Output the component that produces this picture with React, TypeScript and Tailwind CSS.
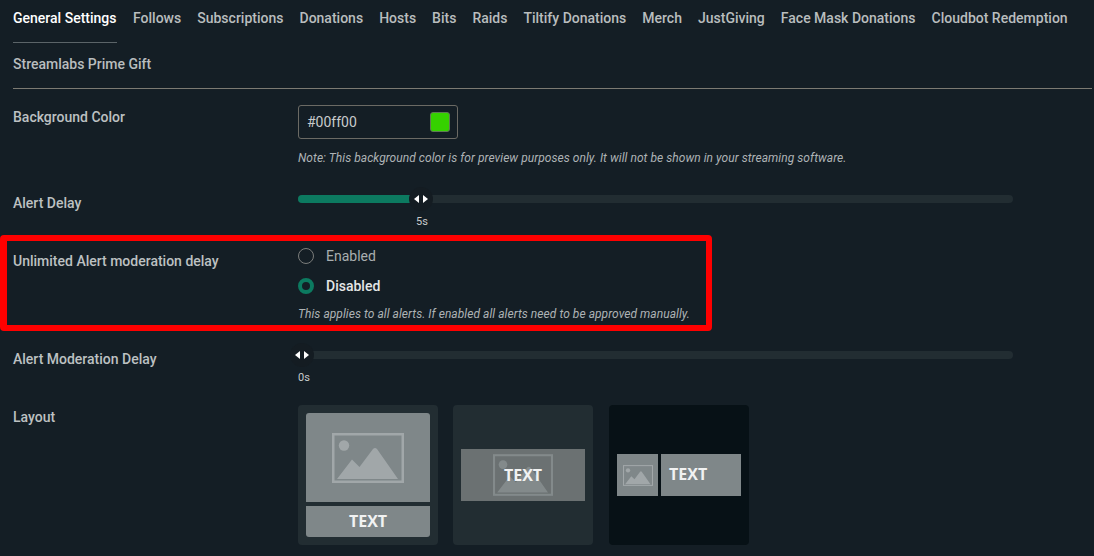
import React from "react";

const tabs = [
  "General Settings",
  "Follows",
  "Subscriptions",
  "Donations",
  "Hosts",
  "Bits",
  "Raids",
  "Tiltify Donations",
  "Merch",
  "JustGiving",
  "Face Mask Donations",
  "Cloudbot Redemption",
];

// Picture placeholder used in the layout cards
const ImageIcon = ({ className, color }: { className: string; color: string }) => (
  <svg viewBox="0 0 72 50" className={className} fill="none">
    <rect x="1.25" y="1.25" width="69.5" height="47.5" stroke={color} strokeWidth="2.5" />
    <circle cx="12" cy="12.5" r="5.2" fill={color} />
    <path d="M5 46 L20 26.5 L27.5 34 L41 16 Q43 14 45 16 L66 46 Z" fill={color} />
  </svg>
);

const Thumb = ({ left }: { left: string }) => (
  <div
    className={`absolute top-1/2 -translate-y-1/2 ${left} w-6 h-6 rounded-full bg-[#141c22] flex items-center justify-center gap-[4px]`}
  >
    <span className="w-0 h-0 border-y-[4.5px] border-y-transparent border-r-[5px] border-r-white" />
    <span className="w-0 h-0 border-y-[4.5px] border-y-transparent border-l-[5px] border-l-white" />
  </div>
);

const Label = ({ children }: { children: React.ReactNode }) => (
  <div className="w-[285px] shrink-0 text-sm font-medium leading-4 text-[#bdc1c2]">
    {children}
  </div>
);

const Note = ({ children }: { children: React.ReactNode }) => (
  <p className="text-xs italic leading-4 tracking-[0.05px] text-[#aeb3b5]">{children}</p>
);

export default function App() {
  return (
    <div className="relative w-[1094px] h-[556px] overflow-hidden bg-[#141e25] font-['Roboto',sans-serif] pl-[13px] pr-[2px]">
      {/* Tabs */}
      <div className="border-b border-[#7c7a72] h-[89px]">
        <div className="flex gap-4 pt-[10px] h-[43px] tracking-[0.004px]">
          {tabs.map((tab, i) => (
            <div
              key={tab}
              className={
                i === 0
                  ? "h-[33px] w-[104px] border-b border-[#5b6468] text-sm font-medium leading-4 text-white"
                  : "text-sm font-medium leading-4 text-[#b9bdbe]"
              }
            >
              {tab}
            </div>
          ))}
        </div>
        <div className="pt-[13px] text-sm font-medium leading-4 text-[#b9bdbe]">
          Streamlabs Prime Gift
        </div>
      </div>

      {/* Background Color */}
      <div className="flex mt-4">
        <div className="pt-1">
          <Label>Background Color</Label>
        </div>
        <div>
          <div className="w-40 h-[34px] border border-[#6b6a64] rounded-[3px] flex items-center justify-between pl-2 pr-[7px] text-sm text-[#c8cbcc]">
            <span>#00ff00</span>
            <span className="w-5 h-5 rounded-[3px] bg-[#35d100] border border-[#5f7a55]" />
          </div>
          <div className="mt-[11px]">
            <Note>Note: This background color is for preview purposes only. It will not be shown in your streaming software.</Note>
          </div>
        </div>
      </div>

      {/* Alert Delay */}
      <div className="flex mt-[28px]">
        <div className="mt-[1px]">
          <Label>Alert Delay</Label>
        </div>
        <div className="w-[715px]">
          <div className="relative h-2 mt-[1px] rounded-full bg-[#222d32]">
            <div className="h-2 w-[112px] rounded-l-full bg-[#0c7a60]" />
            <Thumb left="left-[111px]" />
          </div>
          <div className="mt-[11px] pl-[118px] text-[11px] leading-4 text-[#c8cbcc]">5s</div>
        </div>
      </div>

      {/* Unlimited Alert moderation delay */}
      <div className="flex mt-[17px]">
        <div className="pt-[6px]">
          <Label>Unlimited Alert moderation delay</Label>
        </div>
        <div>
          <div className="flex items-center gap-[12px] h-4 mt-[1px] text-sm text-[#a9aeb0]">
            <span className="w-4 h-4 rounded-full border border-[#7b7d7b]" />
            Enabled
          </div>
          <div className="flex items-center gap-[12px] h-4 mt-[14px] text-sm font-medium text-[#e4e6e6]">
            <span className="w-4 h-4 rounded-full border-[4px] border-[#0c7a60] bg-[#141e25]" />
            Disabled
          </div>
          <div className="mt-[12px]">
            <Note>This applies to all alerts. If enabled all alerts need to be approved manually.</Note>
          </div>
        </div>
      </div>

      {/* Alert Moderation Delay */}
      <div className="flex mt-[28px]">
        <div className="mt-[1px]">
          <Label>Alert Moderation Delay</Label>
        </div>
        <div className="w-[715px]">
          <div className="relative h-2 mt-[1px] rounded-full bg-[#222d32]">
            <Thumb left="-left-2" />
          </div>
          <div className="mt-[11px] text-[11px] leading-4 text-[#c8cbcc]">0s</div>
        </div>
      </div>

      {/* Layout */}
      <div className="flex mt-[19px]">
        <div className="pt-[4px]">
          <Label>Layout</Label>
        </div>
        <div className="flex gap-[15px]">
          <div className="w-[140px] h-[140px] rounded-[4px] bg-[#222d32] p-2">
            <div className="h-[89px] rounded-t-[3px] bg-[#7f8789] flex items-center justify-center">
              <ImageIcon className="w-[72px] h-[50px]" color="#a1a7a9" />
            </div>
            <div className="h-[31px] mt-1 pb-[2px] rounded-b-[3px] bg-[#7f8789] flex items-center justify-center text-base font-bold font-['Open_Sans',sans-serif] text-[#f1f2f2]">
              TEXT
            </div>
          </div>

          <div className="w-[140px] h-[140px] rounded-[4px] bg-[#222d32] px-2 flex items-center">
            <div className="relative w-full h-[52px] bg-[#6b7172] flex items-center justify-center">
              <ImageIcon className="w-[60px] h-[42px]" color="#838a8b" />
              <span className="absolute inset-0 flex items-center justify-center text-base font-bold font-['Open_Sans',sans-serif] text-[#f1f2f2]">
                TEXT
              </span>
            </div>
          </div>

          <div className="ml-[1px] w-[140px] h-[140px] rounded-[4px] bg-[#071116] px-2 flex items-center gap-[3px]">
            <div className="w-[41px] h-[42px] bg-[#7f8789] flex items-center justify-center">
              <ImageIcon className="w-[30px] h-[21px]" color="#a1a7a9" />
            </div>
            <div className="flex-1 h-[42px] pb-[2px] bg-[#7f8789] flex items-center pl-2 text-base font-bold font-['Open_Sans',sans-serif] text-[#f1f2f2]">
              TEXT
            </div>
          </div>
        </div>
      </div>

      {/* Highlight box */}
      <div className="absolute left-0 top-[235px] w-[712px] h-[96px] border-[6px] border-l-[7px] border-[#ff0000] rounded-[4px]" />
    </div>
  );
}
